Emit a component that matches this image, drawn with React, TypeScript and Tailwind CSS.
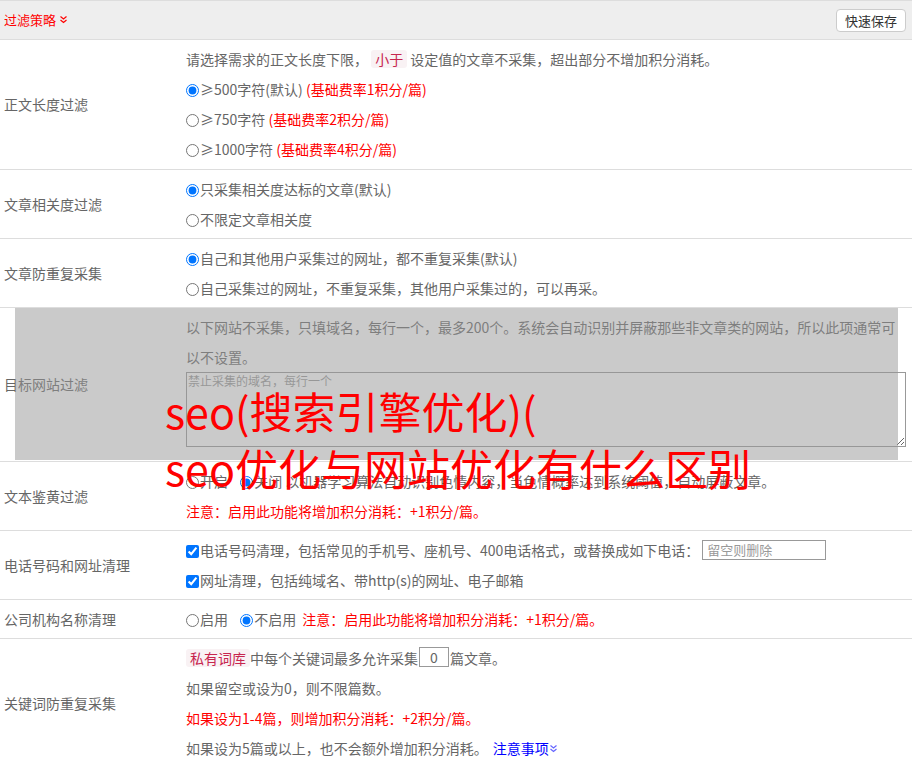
import type { ReactNode } from "react";

const font = { fontFamily: '"Noto Sans CJK SC", "Noto Sans", sans-serif' };

function Radio({ checked = false }: { checked?: boolean }) {
  return (
    <input
      type="radio"
      checked={checked}
      readOnly
      className="m-0 mr-px h-[13px] w-[13px] align-[-2px]"
    />
  );
}

function Check() {
  return (
    <input
      type="checkbox"
      checked
      readOnly
      className="m-0 mr-px h-[13px] w-[13px] align-[-2px]"
    />
  );
}

function Tag({ children }: { children: ReactNode }) {
  return (
    <span className="inline-block rounded-[3px] bg-[#f9f2f4] px-1 leading-[18px] text-[#c7254e]">
      {children}
    </span>
  );
}

function Chevrons({ color }: { color: string }) {
  return (
    <svg width="9" height="9" viewBox="0 0 9 9" className="inline-block align-[1px]">
      <path d="M1.5 1.5 4.5 4 7.5 1.5M1.5 5 4.5 7.5 7.5 5" fill="none" stroke={color} strokeWidth="1.2" />
    </svg>
  );
}

function Row({
  label,
  children,
  extra,
  pad = "py-1",
}: {
  label: string;
  children: ReactNode;
  extra?: ReactNode;
  pad?: string;
}) {
  return (
    <div className="relative flex border-b border-[#dddddd]">
      <div className="flex w-[186px] shrink-0 items-center pl-1 text-[#666666]">{label}</div>
      <div className={`flex-1 pr-1 ${pad}`}>{children}</div>
      {extra}
    </div>
  );
}

function Line({ children, className = "" }: { children: ReactNode; className?: string }) {
  return <div className={`h-[30px] whitespace-nowrap leading-[30px] ${className}`}>{children}</div>;
}

export default function App() {
  return (
    <div className="relative w-[912px] bg-white text-[14px] text-[#666666]" style={font}>
      <div className="flex h-[40px] items-center justify-between border-y border-[#dddddd] bg-[#eeeeee] pl-1 pr-[6px]">
        <span className="text-[13px] text-[#ff0000]">
          过滤策略 <Chevrons color="#ff0000" />
        </span>
        <button className="h-[23px] rounded-[4px] border border-[#cccccc] bg-white px-[8px] text-[13px] leading-[21px] text-[#333333]">
          快速保存
        </button>
      </div>

      <Row label="正文长度过滤" pad="pt-1 pb-[5px]">
        <Line>
          请选择需求的正文长度下限， <Tag>小于</Tag> 设定值的文章不采集，超出部分不增加积分消耗。
        </Line>
        <Line>
          <Radio checked />≥500字符(默认) <span className="text-[#ff0000]">(基础费率1积分/篇)</span>
        </Line>
        <Line>
          <Radio />≥750字符 <span className="text-[#ff0000]">(基础费率2积分/篇)</span>
        </Line>
        <Line>
          <Radio />≥1000字符 <span className="text-[#ff0000]">(基础费率4积分/篇)</span>
        </Line>
      </Row>

      <Row label="文章相关度过滤">
        <Line>
          <Radio checked />只采集相关度达标的文章(默认)
        </Line>
        <Line>
          <Radio />不限定文章相关度
        </Line>
      </Row>

      <Row label="文章防重复采集">
        <Line>
          <Radio checked />自己和其他用户采集过的网址，都不重复采集(默认)
        </Line>
        <Line>
          <Radio />自己采集过的网址，不重复采集，其他用户采集过的，可以再采。
        </Line>
      </Row>

      <Row
        label="目标网站过滤"
        extra={<div className="absolute bottom-px left-[15px] right-[14px] top-0 bg-[rgba(150,150,150,0.5)]" />}
      >
        <Line>以下网站不采集，只填域名，每行一个，最多200个。系统会自动识别并屏蔽那些非文章类的网站，所以此项通常可</Line>
        <Line>以不设置。</Line>
        <textarea
          readOnly
          placeholder="禁止采集的域名，每行一个"
          className="mb-[10px] block h-[75px] w-[720px] border border-[#999999] bg-white px-[1px] py-0 text-[12px] leading-[16px] placeholder:text-[#999999]"
        />
      </Row>

      <Row label="文本鉴黄过滤">
        <Line>
          <Radio />开启 <span className="ml-[9px]" />
          <Radio checked />关闭 以机器学习算法自动识别色情内容，当色情概率达到系统阈值，自动屏蔽文章。
        </Line>
        <Line className="text-[#ff0000]">注意：启用此功能将增加积分消耗：+1积分/篇。</Line>
      </Row>

      <Row label="电话号码和网址清理">
        <Line>
          <Check />电话号码清理，包括常见的手机号、座机号、400电话格式，或替换成如下电话：
          <input
            readOnly
            placeholder="留空则删除"
            className="ml-[3px] h-[20px] w-[124px] border border-[#999999] px-1 align-[1px] text-[13px] leading-[18px] placeholder:text-[#999999]"
          />
        </Line>
        <Line>
          <Check />网址清理，包括纯域名、带http(s)的网址、电子邮箱
        </Line>
      </Row>

      <Row label="公司机构名称清理">
        <Line>
          <Radio />启用 <span className="ml-[9px]" />
          <Radio checked />不启用 <span className="ml-[3px] text-[#ff0000]">注意：启用此功能将增加积分消耗：+1积分/篇。</span>
        </Line>
      </Row>

      <div className="relative flex">
        <div className="flex w-[186px] shrink-0 items-center pl-1 text-[#666666]">关键词防重复采集</div>
        <div className="flex-1 py-1">
          <Line>
            <Tag>私有词库</Tag>中每个关键词最多允许采集
            <input
              readOnly
              value="0"
              className="mx-px h-[20px] w-[30px] border border-[#999999] text-center align-[1px] text-[14px] leading-[18px] text-[#666666]"
            />
            篇文章。
          </Line>
          <Line>如果留空或设为0，则不限篇数。</Line>
          <Line className="text-[#ff0000]">如果设为1-4篇，则增加积分消耗：+2积分/篇。</Line>
          <Line>
            如果设为5篇或以上，也不会额外增加积分消耗。
            <span className="ml-[5px] text-[#0000ff]">
              注意事项<Chevrons color="#6666ff" />
            </span>
          </Line>
        </div>
      </div>

      <div className="pointer-events-none absolute left-[165px] top-[382px] text-[43px] leading-[57px] text-[#ff0000]">
        <div>seo(搜索引擎优化)(</div>
        <div>seo优化与网站优化有什么区别</div>
      </div>
    </div>
  );
}
